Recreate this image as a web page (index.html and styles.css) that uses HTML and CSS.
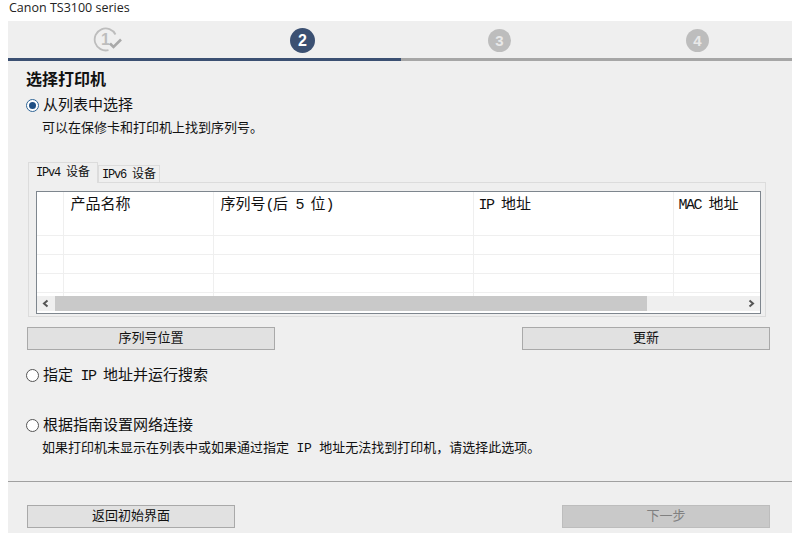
FILE: index.html
```html
<!DOCTYPE html>
<html lang="zh-CN">
<head>
  <meta charset="UTF-8">
  <title>Canon TS3100 series</title>
  <link rel="stylesheet" href="styles.css">
</head>
<body>
  <div class="titlebar">Canon TS3100 series</div>
  <div class="panel">
    <div class="steps">
      <div class="step">
        <svg class="step-done" width="32" height="26" viewBox="0 0 32 26">
          <path d="M23.5 7.5A11 11 0 1 0 16.5 23.1" fill="none" stroke="#bdbdbd" stroke-width="1.8"/>
          <text x="9" y="18" class="step-done-num">1</text>
          <path d="M18 16.5l3.5 3.5 7.5-7.5" fill="none" stroke="#a9a9a9" stroke-width="2.6"/>
        </svg>
      </div>
      <div class="step"><span class="step-num current">2</span></div>
      <div class="step"><span class="step-num">3</span></div>
      <div class="step"><span class="step-num">4</span></div>
    </div>
    <div class="progress"><div class="progress-fill"></div></div>

    <div class="content">
      <h1 class="heading">选择打印机</h1>
      <div class="option option-first"><span class="radio checked"></span>从列表中选择</div>
      <div class="hint">可以在保修卡和打印机上找到序列号<span class="punct">。</span></div>

      <div class="tabs">
        <div class="tab active"><span class="en">IPv4 </span>设备</div>
        <div class="tab"><span class="en">IPv6 </span>设备</div>
      </div>
      <div class="tab-body">
        <div class="list">
          <div class="list-view">
            <table class="devices">
              <colgroup>
                <col class="col-a"><col class="col-b"><col class="col-c"><col class="col-d"><col class="col-e">
              </colgroup>
              <thead>
                <tr><th></th><th>产品名称</th><th>序列号<span class="en">(</span>后<span class="en"> 5 </span>位<span class="en">)</span></th><th class="th-en"><span class="en">IP </span>地址</th><th class="th-en"><span class="en">MAC </span>地址</th></tr>
              </thead>
              <tbody>
                <tr><td></td><td></td><td></td><td></td><td></td></tr>
                <tr><td></td><td></td><td></td><td></td><td></td></tr>
                <tr><td></td><td></td><td></td><td></td><td></td></tr>
                <tr><td></td><td></td><td></td><td></td><td></td></tr>
                <tr><td></td><td></td><td></td><td></td><td></td></tr>
              </tbody>
            </table>
          </div>
          <div class="scrollbar">
            <svg class="arrow" width="18" height="15" viewBox="0 0 18 15"><path d="M10.5 4.5L7 7.5l3.5 3" fill="none" stroke="#555" stroke-width="2"/></svg>
            <div class="thumb"></div>
            <svg class="arrow" width="18" height="15" viewBox="0 0 18 15"><path d="M7.5 4.5L11 7.5l-3.5 3" fill="none" stroke="#555" stroke-width="2"/></svg>
          </div>
        </div>
      </div>

      <div class="btn-row">
        <button class="btn btn-wide">序列号位置</button>
        <button class="btn btn-wide">更新</button>
      </div>

      <div class="option option-ip"><span class="radio"></span><span>指定<span class="en"> IP </span>地址并运行搜索</span></div>
      <div class="option option-guide"><span class="radio"></span>根据指南设置网络连接</div>
      <div class="hint">如果打印机未显示在列表中或如果通过指定<span class="en"> IP </span>地址无法找到打印机<span class="punct">，</span>请选择此选项<span class="punct">。</span></div>
    </div>

    <div class="footer">
      <button class="btn btn-foot">返回初始界面</button>
      <button class="btn btn-foot" disabled>下一步</button>
    </div>
  </div>
</body>
</html>
```

FILE: styles.css
```css
* {
  box-sizing: border-box;
}
body {
  margin: 0;
  background: #fff;
  color: #111;
  font-family: "Liberation Mono", "Noto Sans CJK SC", monospace;
  font-size: 13px;
  overflow: hidden;
}
/* half-width latin next to the CJK glyphs */
.en {
  letter-spacing: -0.1em;
  white-space: pre;
}
/* centred punctuation, the TC face has it */
.punct {
  font-family: "Noto Sans CJK TC", sans-serif;
  line-height: 0;
}
.titlebar {
  height: 21px;
  padding: 0 0 0 9px;
  font-family: "Open Sans", "Liberation Sans", sans-serif;
  font-size: 12.5px;
  line-height: 15px;
  color: #222;
}
.panel {
  width: 784px;
  height: 512px;
  margin-left: 8px;
  background: #efefef;
  display: flex;
  flex-direction: column;
}
.steps {
  height: 37px;
  display: grid;
  grid-template-columns: 196px 197px 197px 194px;
}
.step {
  display: flex;
  justify-content: center;
  align-items: center;
  padding-top: 1px;
}
.step:last-child {
  padding-left: 5px;
}
.step-done {
  margin-left: 4px;
}
.step-done-num {
  font-family: "Liberation Sans", sans-serif;
  font-size: 16px;
  font-weight: bold;
  fill: #bdbdbd;
}
.step-num {
  width: 23px;
  height: 23px;
  border-radius: 50%;
  background: #bdbdbd;
  color: #e9e9e9;
  font-family: "Liberation Sans", sans-serif;
  font-size: 15px;
  font-weight: bold;
  line-height: 23px;
  text-align: center;
}
.step-num.current {
  width: 25px;
  height: 25px;
  line-height: 25px;
  background: #3b5072;
  color: #fff;
  font-size: 16px;
}
.progress {
  height: 3px;
  background: #a6a6a6;
}
.progress-fill {
  width: 393px;
  height: 3px;
  background: #3b5072;
}
.content {
  flex: 1;
  padding: 0 22px 0 18px;
}
.heading {
  margin: 7px 0 0;
  font-family: "Noto Sans CJK SC", sans-serif;
  font-size: 16px;
  font-weight: bold;
  line-height: 20px;
  color: #111;
}
.option {
  display: flex;
  align-items: center;
  gap: 4px;
  font-size: 15px;
  line-height: 20px;
}
.option-first {
  margin-top: 9px;
}
.option-ip {
  margin-top: 17px;
}
.option-guide {
  margin-top: 30px;
}
.radio {
  width: 13px;
  height: 13px;
  margin-top: -4px;
  border: 1px solid #555;
  border-radius: 50%;
  background: #fff;
  flex: none;
  display: flex;
  align-items: center;
  justify-content: center;
}
.radio.checked {
  border-color: #2f6596;
}
.radio.checked::after {
  content: "";
  width: 7px;
  height: 7px;
  border-radius: 50%;
  background: #1f4f84;
}
.hint {
  margin: 2px 0 0 16px;
  height: 20px;
  font-size: 13px;
  line-height: 20px;
}
.hint .en {
  letter-spacing: -0.02em;
}
.tabs {
  display: flex;
  align-items: flex-end;
  margin: 23px 0 0 2px;
  height: 21px;
  position: relative;
  z-index: 1;
}
.tab {
  height: 18px;
  width: 62px;
  padding-left: 3px;
  border: 1px solid #dcdcdc;
  border-bottom: none;
  font-size: 12px;
  line-height: 19px;
  white-space: nowrap;
}
.tab.active {
  width: 70px;
  height: 21px;
  padding-left: 7px;
  background: #efefef;
  line-height: 20px;
}
.tab-body {
  width: 738px;
  height: 135px;
  margin: -1px 0 0 2px;
  padding: 8px 6px 0 7px;
  border: 1px solid #dcdcdc;
}
.list {
  width: 725px;
  height: 123px;
  border: 1px solid #7e868e;
  background: #fff;
  display: flex;
  flex-direction: column;
}
.list-view {
  height: 104px;
  overflow: hidden;
}
.devices {
  table-layout: fixed;
  width: 723px;
  border-collapse: collapse;
  font-size: 15px;
}
.col-a { width: 26px; }
.col-b { width: 150px; }
.col-c { width: 260px; }
.col-d { width: 200px; }
.col-e { width: 87px; }
.devices th {
  height: 24px;
  padding: 5px 0 1px 7px;
  font-weight: normal;
  line-height: 18px;
  text-align: left;
  white-space: nowrap;
  border-left: 1px solid #efefef;
}
.devices .th-en {
  padding-left: 5px;
}
.devices th:first-child,
.devices td:first-child {
  border-left: none;
}
.devices td {
  height: 19px;
  border-left: 1px solid #efefef;
  border-bottom: 1px solid #efefef;
}
.scrollbar {
  height: 15px;
  background: #efefef;
  display: flex;
}
.arrow {
  flex: none;
}
.thumb {
  width: 592px;
  background: #c9c9c9;
}
.scrollbar .arrow:last-child {
  margin-left: auto;
}
.btn-row {
  display: flex;
  justify-content: space-between;
  width: 743px;
  margin: 10px 0 0 1px;
}
.btn {
  height: 23px;
  padding: 1px 0 0;
  border: 1px solid #a9a9a9;
  background: #e1e1e1;
  color: #111;
  font-family: "Liberation Mono", "Noto Sans CJK SC", monospace;
  font-size: 13px;
  line-height: 20px;
}
.btn-wide {
  width: 248px;
}
.btn-foot {
  width: 208px;
}
.btn:disabled {
  background: #c9c9c9;
  border-color: #bdbdbd;
  color: #808080;
}
.footer {
  height: 52px;
  margin-top: auto;
  padding: 23px 22px 0 19px;
  border-top: 1px solid #a0a0a0;
  display: flex;
  justify-content: space-between;
}
```
